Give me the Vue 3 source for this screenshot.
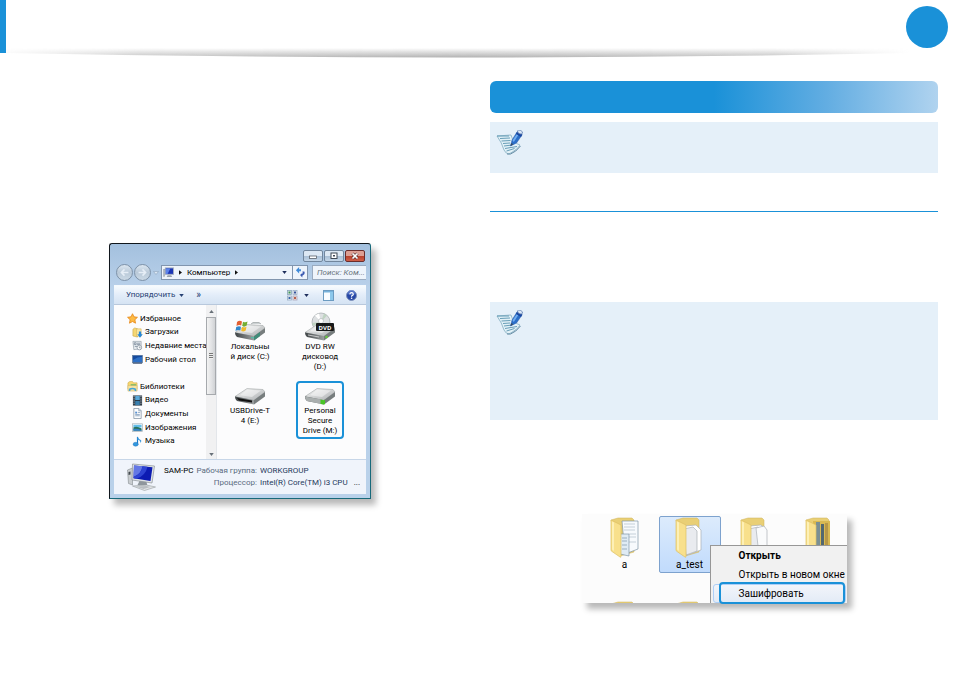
<script setup>
const favorites = [
  { icon: 'star', label: 'Избранное', root: true },
  { icon: 'downloads', label: 'Загрузки' },
  { icon: 'recent', label: 'Недавние места' },
  { icon: 'desktop', label: 'Рабочий стол' },
]
const libraries = [
  { icon: 'libraries', label: 'Библиотеки', root: true },
  { icon: 'video', label: 'Видео' },
  { icon: 'documents', label: 'Документы' },
  { icon: 'pictures', label: 'Изображения' },
  { icon: 'music', label: 'Музыка' },
]
const groups = [favorites, libraries]
const drives = [
  { kind: 'system', lines: ['Локальны', 'й диск (C:)'] },
  { kind: 'dvd', lines: ['DVD RW', 'дисковод', '(D:)'] },
  { kind: 'usb', lines: ['USBDrive-T', '4 (E:)'] },
  { kind: 'secure', lines: ['Personal', 'Secure', 'Drive (M:)'], marked: true },
]
const folders = [
  { name: 'a', kind: 'pages' },
  { name: 'a_test', kind: 'single', selected: true },
  { name: '', kind: 'double' },
  { name: '', kind: 'binder' },
  { name: '', kind: 'single' },
  { name: '', kind: 'single' },
]
const notes = ['short', 'tall']
</script>

<template>
  <div class="page">
    <header class="header">
      <span class="header-tab"></span>
      <svg class="header-shade" viewBox="0 0 954 12" preserveAspectRatio="none" aria-hidden="true">
        <defs>
          <linearGradient id="shade-v" x1="0" y1="0" x2="0" y2="1">
            <stop offset="0" stop-color="#aaa" stop-opacity="0" />
            <stop offset="0.5" stop-color="#aaa" stop-opacity="0.45" />
            <stop offset="1" stop-color="#a8a8a8" stop-opacity="0.9" />
          </linearGradient>
          <linearGradient id="shade-h" x1="0" x2="1" y1="0" y2="0">
            <stop offset="0" stop-color="#fff" stop-opacity="0.1" />
            <stop offset="0.15" stop-color="#fff" stop-opacity="0.8" />
            <stop offset="0.5" stop-color="#fff" />
            <stop offset="0.85" stop-color="#fff" stop-opacity="0.8" />
            <stop offset="1" stop-color="#fff" stop-opacity="0" />
          </linearGradient>
          <mask id="shade-m" maskUnits="userSpaceOnUse" x="0" y="0" width="954" height="12">
            <rect x="6" width="904" height="12" fill="url(#shade-h)" />
          </mask>
        </defs>
        <path d="M6 0H910V5Q458 14 6 5Z" fill="url(#shade-v)" mask="url(#shade-m)" />
      </svg>
      <span class="header-badge"></span>
    </header>

    <main class="columns">
      <section class="column-left">
        <div class="window">
          <div class="titlebar">
            <button class="win-btn" aria-label="Свернуть"><svg viewBox="0 0 18 10"><rect x="5.500" y="5" width="7" height="2.500" fill="#fff" stroke="#59616c" stroke-width=".8" /></svg></button>
            <button class="win-btn" aria-label="Развернуть"><svg viewBox="0 0 18 10"><rect x="6" y="2" width="6" height="5.500" fill="#fff" stroke="#3f4854" stroke-width="1" /><rect x="8" y="4" width="2" height="1.500" fill="#3f4854" /></svg></button>
            <button class="win-btn close" aria-label="Закрыть"><svg viewBox="0 0 18 10"><path d="M6.500 2.500l5 5M11.500 2.500l-5 5" stroke="#5a3030" stroke-width="3" /><path d="M6.500 2.500l5 5M11.500 2.500l-5 5" stroke="#fff" stroke-width="1.700" /></svg></button>
          </div>

          <div class="address-row">
            <button class="nav-btn" aria-label="Назад"><svg viewBox="0 0 17 17"><path d="M13 8.500H5M8.500 5L5 8.500L8.500 12" fill="none" stroke="#e6eef6" stroke-width="1.800" /></svg></button>
            <button class="nav-btn" aria-label="Вперёд"><svg viewBox="0 0 17 17"><path d="M4 8.500h8M8.500 5L12 8.500L8.500 12" fill="none" stroke="#e6eef6" stroke-width="1.800" /></svg></button>
            <svg class="history" viewBox="0 0 6 4"><path d="M0.500 .5h5L3 3.500z" fill="#dbe7f3" stroke="#8fa5bd" stroke-width=".6" /></svg>
            <div class="address">
              <svg class="pc-small" viewBox="0 0 12 12"><rect x="2.500" y="1" width="9" height="7" fill="#1b35b5" stroke="#a8b2c0" /><path d="M3 1.500h5L5 7.500H3z" fill="#5c83ea" /><path d="M5 9h4l1 2H4z" fill="#9aa3ad" /><rect x="0" y="3" width="2" height="7" fill="#c1c9d2" stroke="#7b8591" stroke-width=".4" /></svg>
              <svg class="tri" viewBox="0 0 4 6"><path d="M0 0l4 3l-4 3z" fill="#111" /></svg>
              <button class="crumb">Компьютер</button>
              <svg class="tri" viewBox="0 0 4 6"><path d="M0 0l4 3l-4 3z" fill="#111" /></svg>
              <svg class="drop" viewBox="0 0 6 4"><path d="M0 0h6L3 4z" fill="#1e2e5c" /></svg>
              <button class="refresh" aria-label="Обновить"><svg viewBox="0 0 12 12"><path d="M4.500 0L1 3.500 4.500 7V4.500H6.500V2.500H4.500z" fill="#3f8ad8" /><path d="M8 5h2.200Q11.500 8 8 9.500V11.500L5.500 8.800 8 6.500V8Q9 7 8 5z" fill="#3a59b0" /></svg></button>
            </div>
            <input class="search" type="text" placeholder="Поиск: Ком..." aria-label="Поиск" />
          </div>

          <div class="toolbar">
            <button class="tool-text">Упорядочить <svg class="drop" viewBox="0 0 6 4"><path d="M0 0h6L3 4z" fill="#264173" /></svg></button>
            <button class="tool-text more">»</button>
            <button class="tool-icon view" aria-label="Вид">
              <svg viewBox="0 0 11 11"><rect x=".5" y=".5" width="4" height="4" fill="#dcebe4" stroke="#8ba5b8" stroke-width=".8" /><rect x="1.500" y="1.500" width="2" height="2" fill="#3c9058" /><rect x="6" y=".5" width="4" height="4" fill="#eee" stroke="#9ab0c6" stroke-width=".8" /><rect x="7" y="1.500" width="2" height="2" fill="#34539e" /><rect x=".5" y="6" width="4" height="4" fill="#eee" stroke="#9ab0c6" stroke-width=".8" /><rect x="1.500" y="7" width="2" height="2" fill="#3564a8" /><rect x="6" y="6" width="4" height="4" fill="#f5e0da" stroke="#aaa6b8" stroke-width=".8" /><rect x="7" y="7" width="2" height="2" fill="#b4614d" /></svg>
            </button>
            <svg class="drop" viewBox="0 0 6 4"><path d="M0 0h6L3 4z" fill="#1e2e5c" /></svg>
            <button class="tool-icon pane" aria-label="Область просмотра"><svg viewBox="0 0 11 11"><rect x=".5" y=".5" width="10" height="10" fill="#f9fcff" stroke="#6c9bc1" /><rect x="1" y="1" width="9" height="1.500" fill="#77b2dc" /><rect x="7" y="2" width="3" height="8" fill="#8cc8ec" /></svg></button>
            <button class="tool-icon help" aria-label="Справка"><svg viewBox="0 0 11 11"><circle cx="5.500" cy="5.500" r="5" fill="#2748a6" stroke="#7f92bb" /><path d="M1.500 4a4 4 0 0 1 8 0Q5.500 6 1.500 4" fill="#6b8bd8" opacity=".6" /><path d="M3.800 4.300Q4 2.700 5.600 2.700T7.300 4.200Q7.300 5.200 5.600 6V6.800" fill="none" stroke="#fff" stroke-width="1.200" /><circle cx="5.600" cy="8.300" r=".8" fill="#fff" /></svg></button>
          </div>

          <div class="body">
            <nav class="tree">
              <ul v-for="(group, g) in groups" :key="g" class="tree-group">
                <li v-for="item in group" :key="item.label" :class="['tree-item', { root: item.root }]">
                  <a href="#">
                    <svg viewBox="0 0 12 12" aria-hidden="true">
                      <path v-if="item.icon === 'star'" d="M6 .8l1.600 3.400 3.800.5-2.800 2.600.7 3.800L6 9.300l-3.300 1.800.7-3.800L.6 4.700l3.800-.5z" fill="#fdbb45" stroke="#e78718" stroke-width=".9" />
                      <g v-else-if="item.icon === 'downloads'"><path d="M1 2.500l2-1.500 3 1v9L1 9.800z" fill="#f5d774" stroke="#c6a13d" stroke-width=".6" /><path d="M5 2h5v8H5z" fill="#f9e7a3" stroke="#d1b056" stroke-width=".6" /><path d="M7.500 5h2.500v3h1.700L8.700 11.700 5.800 8h1.700z" fill="#2587d8" /></g>
                      <g v-else-if="item.icon === 'recent'"><path d="M1 1.500h9v8l-8 1z" fill="#e8edf1" stroke="#8f9aa4" stroke-width=".7" /><path d="M2.500 3h2v2h-2zM5.500 3.500H9M5.500 5H9M3 7h3" stroke="#718091" stroke-width=".8" fill="none" /><circle cx="8" cy="8.300" r="2.500" fill="#fbfcfd" stroke="#83909d" stroke-width=".8" /><path d="M8 7v1.500h1.500" fill="none" stroke="#526172" stroke-width=".6" /></g>
                      <g v-else-if="item.icon === 'desktop'"><rect x=".5" y="1.500" width="11" height="8" fill="#2c6fc6" stroke="#6e849e" stroke-width=".8" /><path d="M1 6.500Q6 3 11 3V2H1z" fill="#164a9d" /><path d="M1 10h10" stroke="#1c355c" stroke-width="1" /></g>
                      <g v-else-if="item.icon === 'libraries'"><path d="M1 2l2-1.500h3l1 1.500h4v7H1z" fill="#f6d66f" stroke="#cda84a" stroke-width=".6" /><path d="M4 3.500h6v5H4z" fill="#74b768" /><path d="M1 5h10v6H1z" fill="#f7e3a0" stroke="#cbae5c" stroke-width=".5" /><path d="M2 11V8.500Q6 6 10 8.500V11H8.300V9.500Q6 8.500 3.700 9.500V11z" fill="#46a5d6" /></g>
                      <g v-else-if="item.icon === 'video'"><rect x="1" y=".5" width="10" height="11" fill="#26333f" /><path d="M3.500 1h5v4.500h-5z" fill="#58a8d8" /><path d="M3.500 6.500h5V11h-5z" fill="#397fae" /><path d="M2.200 1v10M9.800 1v10" stroke="#dfe5ea" stroke-width="1" stroke-dasharray="1 1" /></g>
                      <g v-else-if="item.icon === 'documents'"><path d="M2 .5h5.500L10 3v8.500H2z" fill="#fcfdfe" stroke="#7d8d9f" stroke-width=".8" /><path d="M7.300.5V3H10" fill="#c1d4e6" stroke="#7d8d9f" stroke-width=".6" /><path d="M3.500 4h2v2h-2z" fill="#568fd0" /><path d="M6.300 4.800h2.500M3.500 7h5M3.500 8.500h5" stroke="#5d7ea7" stroke-width=".7" /></g>
                      <g v-else-if="item.icon === 'pictures'"><rect x=".5" y="2" width="11" height="8.500" fill="#fff" stroke="#9ba7b1" stroke-width=".7" /><path d="M1.500 3h9v3h-9z" fill="#62bdea" /><path d="M1.500 6Q5 4 10.500 7v2.500h-9z" fill="#27735f" /><path d="M1.500 7.500Q6 7 10.500 9v.5h-9z" fill="#3681c9" /></g>
                      <g v-else><path d="M6 1v8" stroke="#1a79c9" stroke-width="1.300" /><path d="M6 .5Q7 3 10 4.500 10.500 6 9 7.500 9.500 4.500 6 4z" fill="#3d9bdf" /><ellipse cx="4" cy="9" rx="2.800" ry="2.100" fill="#3398df" stroke="#1c71ba" stroke-width=".5" /></g>
                    </svg>
                    <span>{{ item.label }}</span>
                  </a>
                </li>
              </ul>
            </nav>

            <div class="scrollbar" aria-hidden="true">
              <svg viewBox="0 0 6 4"><path d="M0 4h6L3 0z" fill="#687078" /></svg>
              <div class="thumb"><span></span></div>
              <svg viewBox="0 0 6 4"><path d="M0 0h6L3 4z" fill="#687078" /></svg>
            </div>

            <ul class="drives">
              <li v-for="drive in drives" :key="drive.kind" :class="['drive', { marked: drive.marked }]">
                <svg viewBox="0 0 32 30" aria-hidden="true">
                  <defs>
                    <linearGradient :id="'top-' + drive.kind" x1="0" x2="1" y1="0" y2="1"><stop offset="0" stop-color="#f5f5f5" /><stop offset="1" stop-color="#aaaeb0" /></linearGradient>
                    <linearGradient :id="'side-' + drive.kind" x1="0" x2="1" y1="0" y2="0"><stop offset="0" stop-color="#3f4446" /><stop offset="1" stop-color="#9b9fa0" /></linearGradient>
                  </defs>
                  <g v-if="drive.kind === 'dvd'">
                    <circle cx="17" cy="10" r="9" fill="#dde0e2" stroke="#a2a7aa" stroke-width=".7" />
                    <path d="M17 10L11 3.500 15 1.500zM17 10l6 6 2.500-4z" fill="#fff" />
                    <path d="M17 10l3-8.500 3 2zM17 10L9 14l-.8-3z" fill="#b8cfba" opacity=".8" />
                    <circle cx="17" cy="9" r="2.500" fill="#fff" stroke="#a8adb0" stroke-width=".6" />
                  </g>
                  <path d="M1 20.500L13 12.500 29 13.500 31 16 20 25z" :fill="`url(#top-${drive.kind})`" stroke="#999e9f" stroke-width=".5" />
                  <path d="M1 20.500L20 24v4.500L3 25Q1 24 1 20.500z" :fill="`url(#side-${drive.kind})`" />
                  <path d="M20 24L31 16v4.500L20 28.500z" fill="#777d7e" />
                  <path d="M13 13.500L27 14.500 18 21 6 19.300z" fill="#fff" opacity=".45" />
                  <g v-if="drive.kind === 'system'">
                    <path d="M17 12l2-1.500h6l2 1.500" fill="#ccd1d2" stroke="#8b9293" stroke-width=".6" />
                    <path d="M3 10Q5.500 8 8 9.500L7.200 13.500Q5 12.500 2.500 14z" fill="#e36032" />
                    <path d="M9 9.800Q11.500 11 13.500 9.500L12.700 13.500Q10 15 8.200 14z" fill="#75ae32" />
                    <path d="M2.200 15Q5 13.500 7 14.700L6.200 18.500Q4 17.500 1.500 19z" fill="#3387ca" />
                    <path d="M8 15Q10.500 16 12.500 14.700L11.700 18.500Q9.500 20 7.200 19z" fill="#f2bb2c" />
                    <path d="M17 25.500l3 .5" stroke="#45c6a9" stroke-width="1.200" /><path d="M20 24.500L26 20v4L20 28.500z" fill="#418c79" />
                  </g>
                  <g v-if="drive.kind === 'dvd'">
                    <rect x="12" y="11" width="18" height="8" rx="1" fill="#17191a" />
                    <text x="21" y="17.500" class="dvd-label" text-anchor="middle">DVD</text>
                    <path d="M4 23l11 2" stroke="#ddd" stroke-width=".8" /><circle cx="22.500" cy="25" r="1.300" fill="#67c83f" />
                  </g>
                  <path v-if="drive.kind === 'usb'" d="M3 22L18 24.500v2L5 24.500z" fill="#111" />
                  <g v-if="drive.kind === 'secure'"><path d="M1 20.500L20 24v4.500L3 25Q1 24 1 20.500z" fill="#a9aeae" /><path d="M16.500 23.500l3.500.7 1-.7v4.500l-1 .5-3.500-.6z" fill="#48c626" /></g>
                </svg>
                <span v-for="line in drive.lines" :key="line">{{ line }}</span>
              </li>
            </ul>
          </div>

          <footer class="status">
            <svg class="pc" viewBox="0 0 30 28" aria-hidden="true">
              <path d="M1 7l5-2v17l-4-1.500z" fill="#c9cdd0" stroke="#858b8f" stroke-width=".6" /><path d="M2 9l2-.5v3l-2 .5z" fill="#434a50" />
              <path d="M6 1L28 3 25.500 20 5.500 17z" fill="#dfe3e6" stroke="#8c9298" stroke-width=".7" />
              <path d="M7.500 2.500L26 4.300 24 18 7 15.300z" fill="#0c1bb2" /><path d="M7.500 2.500L16 3.300Q15 11 7 14z" fill="#6378e5" /><path d="M16 3.300l5 .5Q19 13 10 15.700L7 15.300V14Q15 11 16 3.300z" fill="#2d43d2" />
              <path d="M13 18l7 1 1 4-10-1z" fill="#8e969c" /><path d="M6 23l14-1 9 2-11 3.500z" fill="#e1e4e6" stroke="#969c9f" stroke-width=".6" /><path d="M9 23.500l11-.5 4 1-7 2z" fill="#b9bec2" />
            </svg>
            <dl class="details">
              <dt><b>SAM-PC</b>Рабочая группа:</dt>
              <dd>WORKGROUP</dd>
              <dt>Процессор:</dt>
              <dd>Intel(R) Core(TM) i3 CPU</dd>
            </dl>
            <span class="ellipsis">...</span>
          </footer>
        </div>
      </section>

      <section class="column-right">
        <div class="banner"></div>
        <template v-for="note in notes" :key="note">
          <aside :class="['note', note]">
            <svg viewBox="0 0 28 26" aria-hidden="true">
              <path d="M1 6L15 5Q17 13 24 15Q22 19 13 24Q10 24 8 20Q6 13 1 6z" fill="#e2f1f7" stroke="#8fb5c7" stroke-width=".9" />
              <path d="M1 6h12M4 8.500l10-.5M5.500 11l9-.5M7 13.500l7-.5M8 16l8-1M9 18.500l12-2M10.500 21l8-2.500" stroke="#679db7" stroke-width="1" fill="none" />
              <path d="M11 24l3.500 0Q20 22 24.500 16" stroke="#638ba4" stroke-width="1" fill="none" />
              <path d="M14.500 16L16 10l5-8 5 3-5.500 8z" fill="#2a6fc9" stroke="#2458a6" stroke-width=".5" />
              <path d="M16.500 10.500l5-7.500 1.500 1-5.200 8z" fill="#73aef0" />
              <path d="M20 4l1.500-3 5 3-1.500 3z" fill="#1746a0" /><ellipse cx="24" cy="2" rx="2.700" ry="1.700" transform="rotate(28 24 2)" fill="#dbe8f8" stroke="#6b87b5" stroke-width=".8" />
              <path d="M14.500 16l.8-3 2 1.200z" fill="#3b4d63" />
            </svg>
          </aside>
          <hr v-if="note === 'short'" class="rule" />
        </template>

        <figure class="explorer">
          <div class="explorer-view">
            <ul class="folders">
              <li v-for="(folder, i) in folders" :key="i" :class="['folder', { selected: folder.selected }]">
                <svg viewBox="0 0 32 42" aria-hidden="true">
                  <path d="M2 3l7-2h14l2 2v32l-14 4z" fill="#e9cf75" stroke="#cfb35b" stroke-width=".5" />
                  <g v-if="folder.kind === 'pages'" stroke="#8095a6" stroke-width=".7">
                    <path d="M13 4h16v28l-13 5z" fill="#f7fafd" /><path d="M15 7h11M15 10h11M15 13h11M20 17h7M20 20h7M20 25h7" stroke="#afbdc8" fill="none" /><path d="M11 17h9v22l-9-2z" fill="#dfebf4" /><path d="M13 21h5M13 24h5M13 28h5M13 32h5" />
                  </g>
                  <g v-else-if="folder.kind === 'binder'">
                    <path d="M9 4h17v29l-15 5z" fill="#d9b952" /><path d="M12 5h4v31l-4 1z" fill="#7a8f94" /><path d="M17 7h3v28l-3 1z" fill="#536870" /><path d="M21 6h3v27l-3 1z" fill="#b69749" />
                  </g>
                  <g v-else stroke="#aab0b6" stroke-width=".7">
                    <path d="M11 9l11-1 5 5v20l-14 5z" fill="#fff" /><path d="M10 12l9-2 4 4v20l-11 4z" fill="#e9ebef" /><path v-if="folder.kind === 'double'" d="M17 11l8-2 3 4v23l-8 2z" fill="#fafbfc" />
                  </g>
                  <path d="M2 3l10 5v31Q12 41 11 40L3 34.500Q2 34 2 33z" fill="#f8e08c" stroke="#ddc064" stroke-width=".7" />
                  <path d="M3 4.500l2 1v28.500l-2-1.500z" fill="#fdf0b6" />
                </svg>
                <span>{{ folder.name }}</span>
              </li>
            </ul>
            <div class="menu" role="menu">
              <button class="menu-item default" role="menuitem">Открыть</button>
              <button class="menu-item" role="menuitem">Открыть в новом окне</button>
              <button class="menu-item hover" role="menuitem">Зашифровать</button>
            </div>
          </div>
          <span class="marker"></span>
        </figure>
      </section>
    </main>
  </div>
</template>

<style>
body {
  margin: 0;
  background: #fff;
}
</style>

<style scoped>
* {
  box-sizing: border-box;
}
.page {
  font-family: Roboto, "Noto Sans", sans-serif;
  font-size: 8px;
  line-height: 10px;
  color: #000;
}
ul,
dl,
dd,
figure {
  margin: 0;
  padding: 0;
  list-style: none;
}
button {
  margin: 0;
  padding: 0;
  border: 0;
  background: none;
  font: inherit;
  color: inherit;
}
svg {
  display: block;
  flex: none;
}

.header {
  position: relative;
  display: flex;
  justify-content: space-between;
  height: 53px;
  padding-right: 6px;
}
.header-tab {
  width: 6px;
  background: #1a91d8;
}
.header-badge {
  width: 42px;
  height: 42px;
  margin-top: 6px;
  border-radius: 50%;
  background: #1a91d8;
}
.header-shade {
  position: absolute;
  left: 0;
  top: 48px;
  width: 100%;
  height: 12px;
}

.columns {
  display: grid;
  grid-template-columns: minmax(0, 480fr) minmax(0, 458fr);
  padding-right: 16px;
}
.column-left {
  display: flex;
  justify-content: center;
  align-items: flex-start;
  padding-top: 190px;
}
.column-right {
  padding: 28px 0 48px 10px;
}

.window {
  width: 262px;
  padding: 0 4px 4px;
  border: 1px solid;
  border-color: #10161c #17697a #17697a #10161c;
  border-radius: 3px 3px 0 0;
  background: linear-gradient(#a3c0de, #b9d1ea 44px, #b9d1ea);
  box-shadow: 5px 6px 6px rgba(0, 0, 0, 0.28);
}
.titlebar {
  display: flex;
  justify-content: flex-end;
  gap: 1px;
  padding: 6px 1px 2px 0;
}
.win-btn {
  width: 20px;
  height: 12px;
  border: 1px solid #71869d;
  border-radius: 2px;
  background: linear-gradient(#dce8f4 45%, #a9bfd6 50%, #c3d6e8);
}
.win-btn svg {
  width: 18px;
  height: 10px;
}
.win-btn.close {
  border-color: #6b2d2c;
  background: linear-gradient(#dd9f94 45%, #b73f2c 50%, #cf5f48);
}
.address-row {
  display: flex;
  align-items: center;
  height: 17px;
  padding-left: 2px;
}
.nav-btn {
  width: 17px;
  height: 17px;
  margin-right: 1px;
  border: 1px solid #7e92a8;
  border-radius: 50%;
  background: linear-gradient(#dce7f1, #b9c9d8 50%, #cbd9e5);
}
.nav-btn svg {
  width: 15px;
  height: 15px;
}
.history {
  width: 6px;
  height: 4px;
  margin: 0 2px 0 1px;
}
.address {
  display: flex;
  align-items: center;
  gap: 5px;
  width: 147px;
  height: 15px;
  padding-left: 1px;
  border: 1px solid #8195ae;
  background: #eef4fb;
}
.pc-small {
  width: 11px;
  height: 11px;
}
.tri {
  width: 3px;
  height: 5px;
}
.drop {
  width: 5px;
  height: 3px;
}
.address .drop {
  margin-left: auto;
}
.refresh {
  display: flex;
  align-items: center;
  justify-content: center;
  width: 15px;
  height: 13px;
  border-left: 1px solid #8195ae;
}
.refresh svg {
  width: 11px;
  height: 11px;
}
.search {
  flex: 1;
  min-width: 0;
  height: 15px;
  margin-left: 4px;
  padding: 0 0 0 4px;
  border: 1px solid #9aabc0;
  border-right: 0;
  background: #eef4fb;
  font: italic 8px/10px Roboto, "Noto Sans", sans-serif;
}
.search::placeholder {
  color: #6d7680;
  opacity: 1;
}
.toolbar {
  display: flex;
  align-items: center;
  height: 20px;
  margin-top: 4px;
  padding: 0 9px 0 12px;
  border-top: 1px solid #f5f9fd;
  border-bottom: 1px solid #b8c8dc;
  background: linear-gradient(#f7fbfe, #e3edf9 50%, #d5e3f3);
}
.tool-text {
  display: flex;
  align-items: center;
  gap: 4px;
  color: #264173;
}
.more {
  margin: 0 auto 0 12px;
  font-size: 10px;
}
.tool-icon svg {
  width: 11px;
  height: 11px;
}
.view {
  margin-right: 6px;
}
.pane {
  margin: 0 12px 0 14px;
}

.body {
  display: grid;
  grid-template-columns: 92px 11px minmax(0, 1fr);
  height: 154px;
  background: #fcfcfd;
}
.tree {
  display: flex;
  flex-direction: column;
  justify-content: space-between;
  padding: 7px 0 11px 13px;
}
.tree-group {
  display: grid;
  grid-auto-rows: 1fr;
}
.tree-group:first-child {
  flex: 0 0 40%;
}
.tree-group:last-child {
  flex: 0 0 50%;
}
.tree-item {
  padding-left: 5px;
}
.tree-item.root {
  padding-left: 0;
}
.tree-item a {
  display: flex;
  align-items: center;
  gap: 2px;
  height: 100%;
  color: inherit;
  text-decoration: none;
  white-space: nowrap;
}
.tree-item svg {
  width: 11px;
  height: 11px;
}
.scrollbar {
  display: flex;
  flex-direction: column;
  align-items: center;
  padding: 5px 0 3px;
  border-right: 1px solid #e3e6ea;
  background: #f1f1f2;
}
.scrollbar svg {
  width: 5px;
  height: 3px;
}
.thumb {
  display: flex;
  align-items: center;
  justify-content: center;
  width: 10px;
  height: 78px;
  margin: 4px 0 auto;
  border: 1px solid #a6a9ad;
  background: linear-gradient(90deg, #f3f3f3, #e2e3e5 55%, #d0d2d5);
}
.thumb span {
  width: 4px;
  height: 6px;
  background: repeating-linear-gradient(#777 0 1px, #eee 1px 2px);
}
.drives {
  display: grid;
  grid-template-columns: 60px 60px;
  grid-auto-rows: 60px;
  align-content: start;
  gap: 4px 10px;
  padding: 7px 0 0 3px;
}
.drive {
  position: relative;
  display: flex;
  flex-direction: column;
  align-items: center;
  white-space: nowrap;
}
.drive svg {
  width: 32px;
  height: 30px;
}
.dvd-label {
  font: bold 6px "Open Sans", sans-serif;
  fill: #fff;
}
.drive.marked::after {
  content: "";
  position: absolute;
  inset: 5px 6px -3px;
  border: 2px solid #1a91d8;
  border-radius: 4px;
}

.status {
  display: flex;
  align-items: center;
  height: 35px;
  padding: 0 6px 0 12px;
  border-top: 1px solid #c7d6e8;
  background: #f0f4fb;
}
.pc {
  width: 31px;
  height: 28px;
}
.details {
  display: grid;
  grid-template-columns: max-content minmax(0, 1fr);
  gap: 2px 3px;
  flex: 1;
  margin-left: 7px;
  white-space: nowrap;
  color: #1e395b;
}
.details dt {
  color: #5a6b80;
  text-align: right;
}
.details b {
  margin-right: 3px;
  font-weight: 400;
  color: #000;
}
.ellipsis {
  align-self: flex-end;
  padding-bottom: 6px;
}

.banner {
  height: 32px;
  border-radius: 6px;
  background: linear-gradient(90deg, #1a91d8 50%, #62ade2 75%, #b0d3ef);
}
.note {
  padding: 8px 6px;
  background: #e5f0f9;
}
.note svg {
  width: 28px;
  height: 26px;
}
.note.short {
  height: 51px;
  margin-top: 9px;
}
.note.tall {
  height: 118px;
}
.rule {
  height: 1px;
  margin: 38px 0 90px;
  border: 0;
  background: #1a91d8;
}

.explorer {
  position: relative;
  width: 265px;
  margin: 94px auto 0;
  box-shadow: 5px 6px 6px rgba(0, 0, 0, 0.28);
  font-size: 10px;
  line-height: 12px;
}
.explorer-view {
  position: relative;
  height: 89px;
  overflow: hidden;
  background: #fcfcfc;
}
.folders {
  display: grid;
  grid-template-columns: repeat(4, 62px);
  grid-auto-rows: 57px;
  gap: 27px 3px;
  padding: 2px 0 0 12px;
}
.folder {
  display: flex;
  flex-direction: column;
  align-items: center;
  border: 1px solid transparent;
  border-radius: 2px;
}
.folder.selected {
  border-color: #7da2ce;
  background: linear-gradient(#dcebfc, #c1dbfc);
}
.folder svg {
  width: 32px;
  height: 42px;
}
.menu {
  position: absolute;
  left: 128px;
  right: -2px;
  top: 31px;
  display: flex;
  flex-direction: column;
  padding: 0 2px;
  border: 1px solid #979797;
  background: #f1f1f1;
}
.menu-item {
  height: 19px;
  padding-left: 26px;
  text-align: left;
  white-space: nowrap;
}
.menu-item.default {
  font-weight: 700;
}
.menu-item.hover {
  border: 1px solid #aecff7;
  border-radius: 3px;
  padding-left: 25px;
  background: linear-gradient(#f2f5fa, #e3ebf6);
}
.marker {
  position: absolute;
  right: 2px;
  bottom: -1px;
  width: 126px;
  height: 22px;
  border: 2px solid #1a91d8;
  border-radius: 4px;
}
</style>
